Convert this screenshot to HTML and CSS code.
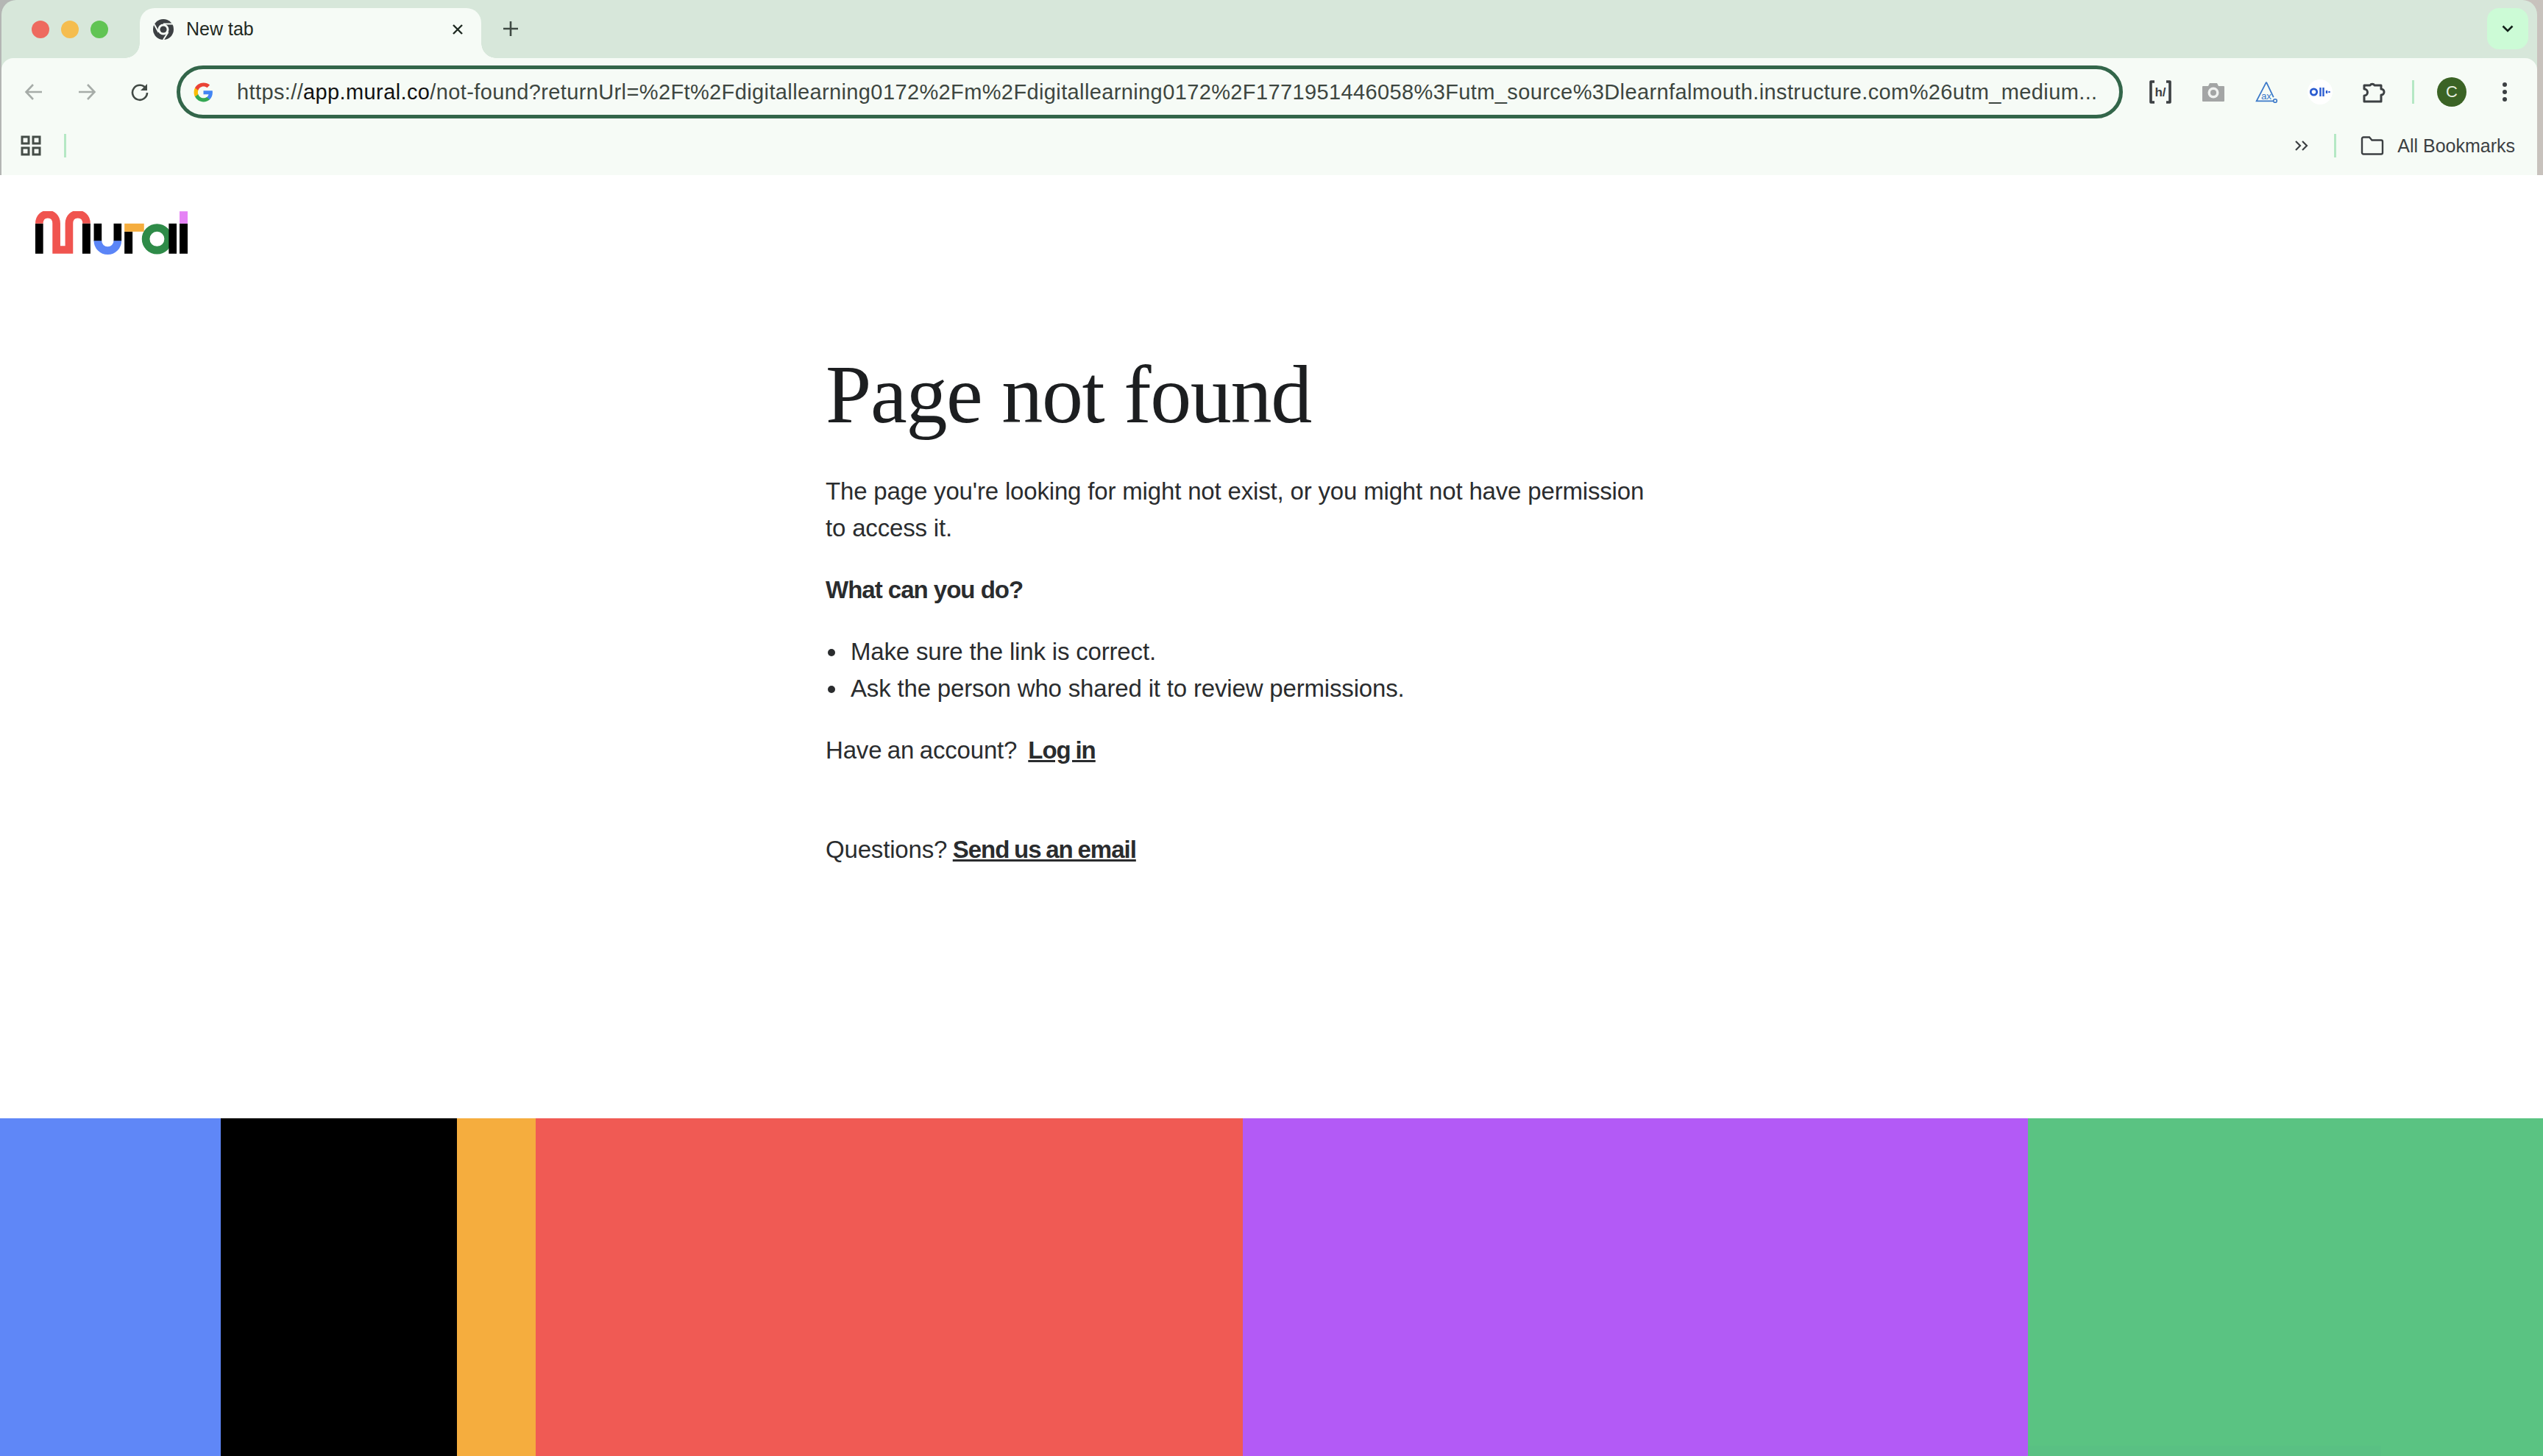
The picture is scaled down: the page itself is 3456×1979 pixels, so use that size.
FILE: index.html
```html
<!DOCTYPE html>
<html lang="en">
  <head>
    <meta charset="UTF-8" />
    <meta name="viewport" content="width=device-width, initial-scale=1.0" />
    <title>Page not found</title>
    <link rel="stylesheet" href="styles.css">
  </head>
  <body>
    <div class="browser">
      <div class="window">
        <div class="tab-strip">
          <div class="traffic">
            <span class="light red"></span>
            <span class="light yellow"></span>
            <span class="light green"></span>
          </div>
          <div class="tab">
            <svg class="tab-icon" viewBox="0 0 28 28">
              <circle cx="14" cy="14" r="14" fill="#3c4043"/>
              <circle cx="14" cy="14" r="7.5" fill="#f6fbf6"/>
              <circle cx="14" cy="14" r="4.6" fill="#3c4043"/>
              <path d="M14 6.5h12.6M7.5 17.8L1.6 7M20.5 17.8L14 28" stroke="#f6fbf6" stroke-width="2" fill="none"/>
            </svg>
            <span class="tab-title">New tab</span>
            <svg class="tab-close" viewBox="0 0 16 16">
              <path d="M2 2l12 12M14 2L2 14" stroke="#1f2a22" stroke-width="2.4" fill="none"/>
            </svg>
          </div>
          <svg class="new-tab" viewBox="0 0 22 22">
            <path d="M11 1v20M1 11h20" stroke="#3f4a43" stroke-width="2.6" fill="none"/>
          </svg>
          <div class="tab-menu">
            <svg viewBox="0 0 16 10" width="16" height="10">
              <path d="M1.5 1.5L8 8l6.5-6.5" stroke="#12201a" stroke-width="2.6" fill="none"/>
            </svg>
          </div>
        </div>

        <div class="toolbar">
          <svg class="nav-icon" viewBox="0 0 26 26">
            <path d="M24 13H3M12 3L2.5 13 12 23" stroke="#a6aca8" stroke-width="2.6" fill="none"/>
          </svg>
          <svg class="nav-icon" viewBox="0 0 26 26">
            <path d="M2 13h21M14 3l9.5 10L14 23" stroke="#a6aca8" stroke-width="2.6" fill="none"/>
          </svg>
          <svg class="nav-icon reload" viewBox="0 0 26 26">
            <path d="M21.5 8.5A10 10 0 1 0 23 14" stroke="#424a45" stroke-width="2.6" fill="none"/>
            <path d="M23 2v9h-9z" fill="#424a45"/>
          </svg>
          <div class="omnibox">
            <svg class="g-icon" viewBox="0 0 48 48">
              <path fill="#4285f4" d="M46 24.5c0-1.600-.1-3.100-.4-4.500H24v8.700h12.400c-.5 2.900-2.200 5.300-4.600 6.900v5.700h7.400c4.300-4 6.800-9.900 6.800-16.800z"/>
              <path fill="#34a853" d="M24 47c6.200 0 11.400-2 15.200-5.600l-7.400-5.700c-2 1.400-4.700 2.200-7.800 2.200-6 0-11-4-12.800-9.500H3.500v5.900C7.300 41.800 15 47 24 47z"/>
              <path fill="#fbbc05" d="M11.200 28.900c-.5-1.400-.7-3-.7-4.900s.2-3.300.7-4.900v-5.900H3.500C2 16.300 1 20 1 24s1 7.700 2.500 10.800z"/>
              <path fill="#ea4335" d="M24 9.600c3.400 0 6.400 1.200 8.800 3.400l6.600-6.600C35.400 2.700 30.200.9 24 .9 15 .9 7.300 6.200 3.500 13.200l7.700 5.900C13 13.600 18 9.600 24 9.600z"/>
            </svg>
            <div class="url"><span class="dim">https://</span>app.mural.co<span class="dim">/not-found?returnUrl=%2Ft%2Fdigitallearning0172%2Fm%2Fdigitallearning0172%2F1771951446058%3Futm_source%3Dlearnfalmouth.instructure.com%26utm_medium...</span></div>
          </div>
          <div class="extensions">
            <!-- hypothesis -->
            <svg class="ext" viewBox="0 0 32 32">
              <path d="M8 2H3v28h5M24 2h5v28h-5" stroke="#3c4043" stroke-width="3.6" fill="none" stroke-linejoin="round"/>
              <text class="h-label" x="16" y="22">h/</text>
            </svg>
            <!-- camera -->
            <svg class="ext" viewBox="0 0 32 32">
              <path d="M2 8h7l2-4h10l2 4h7a1 1 0 0 1 1 1v19a1 1 0 0 1-1 1H2a1 1 0 0 1-1-1V9a1 1 0 0 1 1-1z" fill="#a3a5a5"/>
              <circle cx="16" cy="17" r="7.5" fill="#f0f2f0"/>
              <circle cx="16" cy="17" r="4" fill="#a3a5a5"/>
            </svg>
            <!-- ax -->
            <svg class="ext" viewBox="0 0 36 34">
              <path d="M18 2L3 31h26M18 2l11 23" stroke="#3a78c9" stroke-width="2" fill="none"/>
              <circle cx="31.5" cy="30.5" r="2.6" stroke="#3a78c9" stroke-width="1.8" fill="none"/>
              <text class="ax-label" x="10" y="28">ax</text>
            </svg>
            <!-- otter -->
            <div class="otter">
              <svg viewBox="0 0 28 12" width="28" height="12">
                <circle cx="5.5" cy="6" r="4.2" stroke="#2a5bd0" stroke-width="2.8" fill="none"/>
                <path d="M14.5 0v12M18.5 0v12M23 4v4M26.5 5v2" stroke="#2a5bd0" stroke-width="2.4" fill="none"/>
              </svg>
            </div>
            <!-- puzzle piece -->
            <svg class="ext" viewBox="0 0 32 32">
              <path d="M3 7H11a3.5 3.5 0 0 1 6 0H26V12a4 4 0 0 1 0 8V29H3V21a4.500 4.500 0 0 0 0-9z" stroke="#3c4043" stroke-width="3" fill="none" stroke-linejoin="round"/>
            </svg>
          </div>
          <span class="divider"></span>
          <div class="avatar">C</div>
          <div class="kebab"><i></i><i></i><i></i></div>
        </div>

        <div class="bookmarks">
          <svg class="apps" viewBox="0 0 28 28">
            <path d="M2 2h9v9H2zM17 2h9v9h-9zM2 17h9v9H2zM17 17h9v9h-9z" stroke="#444c47" stroke-width="3" fill="none"/>
          </svg>
          <span class="divider"></span>
          <svg class="more" viewBox="0 0 20 16">
            <path d="M2 2l6 6-6 6M11 2l6 6-6 6" stroke="#3c4043" stroke-width="2.2" fill="none"/>
          </svg>
          <span class="divider"></span>
          <div class="all-bookmarks">
            <svg viewBox="0 0 32 26" width="32" height="26">
              <path d="M2 3.500a2 2 0 0 1 2-2h8l3.500 4H28a2 2 0 0 1 2 2v15a2 2 0 0 1-2 2H4a2 2 0 0 1-2-2z" stroke="#3c4043" stroke-width="2.4" fill="none"/>
            </svg>
            <span>All Bookmarks</span>
          </div>
        </div>
      </div>
    </div>

    <div class="page">
      <header class="site-header">
        <svg class="logo" viewBox="0 0 622 176" role="img" aria-label="Mural">
          <rect x="0" y="50" width="32" height="123" fill="#000"/>
          <path d="M16 50C16 -1 86 -1 86 50V157H138V50C138 -1 209 -1 209 50" stroke="#f0544f" stroke-width="32" fill="none"/>
          <rect x="192" y="50" width="33" height="123" fill="#000"/>
          <rect x="239" y="50" width="32" height="72" fill="#000"/>
          <rect x="320" y="50" width="32" height="72" fill="#000"/>
          <path d="M255 120a40.500 40.500 0 0 0 81 0" stroke="#5b85f7" stroke-width="32" fill="none"/>
          <rect x="364" y="83" width="33" height="90" fill="#000"/>
          <rect x="364" y="50" width="80" height="33" fill="#f5ad3e"/>
          <circle cx="497" cy="113" r="46" stroke="#2e8b48" stroke-width="32" fill="none"/>
          <rect x="545" y="50" width="32" height="123" fill="#000"/>
          <rect x="589" y="50" width="33" height="123" fill="#000"/>
          <rect x="589" y="0" width="33" height="50" fill="#e583f5"/>
        </svg>
      </header>

      <main class="content">
        <h1>Page not found</h1>
        <p>The page you're looking for might not exist, or you might not have permission to access it.</p>
        <p><strong>What can you do?</strong></p>
        <ul>
          <li>Make sure the link is correct.</li>
          <li>Ask the person who shared it to review permissions.</li>
        </ul>
        <p class="link-line">Have an account?&nbsp; <a href="#">Log in</a></p>
        <p class="link-line questions">Questions? <a href="#">Send us an email</a></p>
      </main>
    </div>

    <div class="stripes">
      <div class="stripe-blue"></div>
      <div class="stripe-black"></div>
      <div class="stripe-orange"></div>
      <div class="stripe-red"></div>
      <div class="stripe-purple"></div>
      <div class="stripe-green"></div>
    </div>
  </body>
</html>
```

FILE: styles.css
```css
* {
  box-sizing: border-box;
}
html, body {
  height: 100%;
}
body {
  margin: 0;
  display: flex;
  flex-direction: column;
  font-family: "Liberation Sans", Arial, sans-serif;
  color: #2a2c2e;
  background-color: #fff;
  overflow: hidden;
}

/* browser chrome */
.browser {
  height: 238px;
  flex: none;
  padding: 0 8px 0 2px;
  background: linear-gradient(90deg, #b4b6b4 0, #b4b6b4 50%, #c8c2bd 50%, #c8c2bd 100%);
}
.window {
  height: 238px;
  background-color: #d7e7da;
  border-radius: 20px 20px 0 0;
}
.tab-strip {
  height: 79px;
  display: flex;
  align-items: flex-end;
}
.traffic {
  width: 188px;
  height: 79px;
  padding: 0 0 0 41px;
  display: flex;
  align-items: center;
  gap: 16px;
}
.light {
  width: 24px;
  height: 24px;
  border-radius: 50%;
}
.light.red {
  background-color: #ee6a5f;
}
.light.yellow {
  background-color: #f5bd4f;
}
.light.green {
  background-color: #61c454;
}
.tab {
  position: relative;
  width: 464px;
  height: 68px;
  padding: 0 24px 11px 18px;
  display: flex;
  align-items: center;
  background-color: #f6fbf6;
  border-radius: 20px 20px 0 0;
}
/* the flares at the foot of the active tab */
.tab::before,
.tab::after {
  content: "";
  position: absolute;
  bottom: 0;
  width: 20px;
  height: 20px;
}
.tab::before {
  left: -20px;
  background: radial-gradient(circle at 0 0, transparent 19.5px, #f6fbf6 20px);
}
.tab::after {
  right: -20px;
  background: radial-gradient(circle at 100% 0, transparent 19.5px, #f6fbf6 20px);
}
.tab-icon {
  width: 28px;
  height: 28px;
}
.tab-title {
  margin-left: 17px;
  font-size: 25px;
  color: #1f2a22;
}
.tab-close {
  width: 16px;
  height: 16px;
  margin-left: auto;
}
.new-tab {
  width: 22px;
  height: 22px;
  margin: 0 0 29px 29px;
}
.tab-menu {
  width: 56px;
  height: 56px;
  margin: 0 12px 12px auto;
  display: flex;
  align-items: center;
  justify-content: center;
  background-color: #ccfbd6;
  border-radius: 16px;
}
.toolbar {
  height: 79px;
  padding: 0 10px 0 31px;
  display: flex;
  align-items: center;
  background-color: #f6fbf6;
  border-radius: 16px 16px 0 0;
}
.nav-icon {
  width: 26px;
  height: 26px;
  margin: 13px 46px 0 0;
}
.nav-icon.reload {
  margin-right: 37px;
}
.omnibox {
  width: 2645px;
  height: 72px;
  margin-top: 13px;
  padding: 0 18px 0 18px;
  display: flex;
  align-items: center;
  border: 5px solid #33664a;
  border-radius: 36px;
}
.g-icon {
  width: 27px;
  height: 27px;
  flex: none;
}
.url {
  margin-left: 32px;
  font-size: 29px;
  letter-spacing: 0.38px;
  white-space: nowrap;
  color: #111;
}
.url .dim {
  color: #3d4640;
}
.extensions {
  margin: 13px 0 0 35px;
  display: flex;
  align-items: center;
  gap: 40px;
}
.ext {
  width: 32px;
  height: 32px;
}
.h-label {
  font-size: 17px;
  font-weight: 700;
  text-anchor: middle;
  fill: #3c4043;
}
.ax-label {
  font-size: 15px;
  fill: #3a78c9;
}
.otter {
  width: 34px;
  height: 34px;
  display: flex;
  align-items: center;
  justify-content: center;
  background-color: #fff;
  border-radius: 50%;
}
.divider {
  width: 3px;
  height: 32px;
  background-color: #b5e8c4;
}
.toolbar .divider {
  margin: 13px 0 0 36px;
}
.avatar {
  width: 40px;
  height: 40px;
  margin: 13px 0 0 31px;
  display: flex;
  align-items: center;
  justify-content: center;
  font-size: 22px;
  color: #e8f0e0;
  background-color: #3b6325;
  border-radius: 50%;
}
.kebab {
  margin: 13px 0 0 49px;
  display: flex;
  flex-direction: column;
  gap: 4px;
}
.kebab i {
  width: 6px;
  height: 6px;
  background-color: #3c4043;
  border-radius: 50%;
}
.bookmarks {
  height: 80px;
  padding: 0 30px 0 26px;
  display: flex;
  align-items: center;
  background-color: #f6fbf6;
}
.apps {
  width: 28px;
  height: 28px;
  margin-right: 31px;
}
.more {
  width: 20px;
  height: 16px;
  margin: 0 34px 0 auto;
}
.all-bookmarks {
  margin-left: 33px;
  display: flex;
  align-items: center;
  gap: 18px;
  font-size: 25px;
  color: #3c4043;
}

/* page */
.page {
  flex: 1;
}
.site-header {
  padding: 49px 0 0 48px;
}
.logo {
  display: block;
  width: 207px;
  height: 59px;
}
.content {
  width: 1212px;
  margin: 0 auto;
  padding-top: 130px;
  font-size: 33px;
  line-height: 50px;
  letter-spacing: -0.17px;
}
.content h1 {
  margin: 0 0 47px;
  font-family: "Liberation Serif", "Times New Roman", serif;
  font-size: 112px;
  font-weight: 400;
  line-height: 120px;
  letter-spacing: -1.3px;
  color: #1c1e20;
}
.content p {
  max-width: 1130px;
  margin: 0 0 34px;
}
.content ul {
  margin: 0 0 34px;
  padding-left: 34px;
  list-style: none;
}
.content li {
  position: relative;
}
.content li::before {
  content: "";
  position: absolute;
  left: -31px;
  top: 21px;
  width: 10px;
  height: 10px;
  background-color: #2a2c2e;
  border-radius: 50%;
}
.content strong,
.content a {
  font-weight: 700;
  letter-spacing: -1px;
  color: #2a2c2e;
}
.content .link-line {
  word-spacing: -1.5px;
}
.content .questions {
  margin-top: 85px;
}

/* colour band */
.stripes {
  height: 459px;
  flex: none;
  display: grid;
  grid-template-columns: 300px 321px 107px 961px 1067px 1fr;
}
.stripe-blue {
  background-color: #5f87f7;
}
.stripe-black {
  background-color: #000;
}
.stripe-orange {
  background-color: #f5ad3e;
}
.stripe-red {
  background-color: #f05a54;
}
.stripe-purple {
  background-color: #b35af6;
}
.stripe-green {
  background: linear-gradient(#59c083, #59c083) 0 100% / 480px 14px no-repeat, #5ac382;
}
```
